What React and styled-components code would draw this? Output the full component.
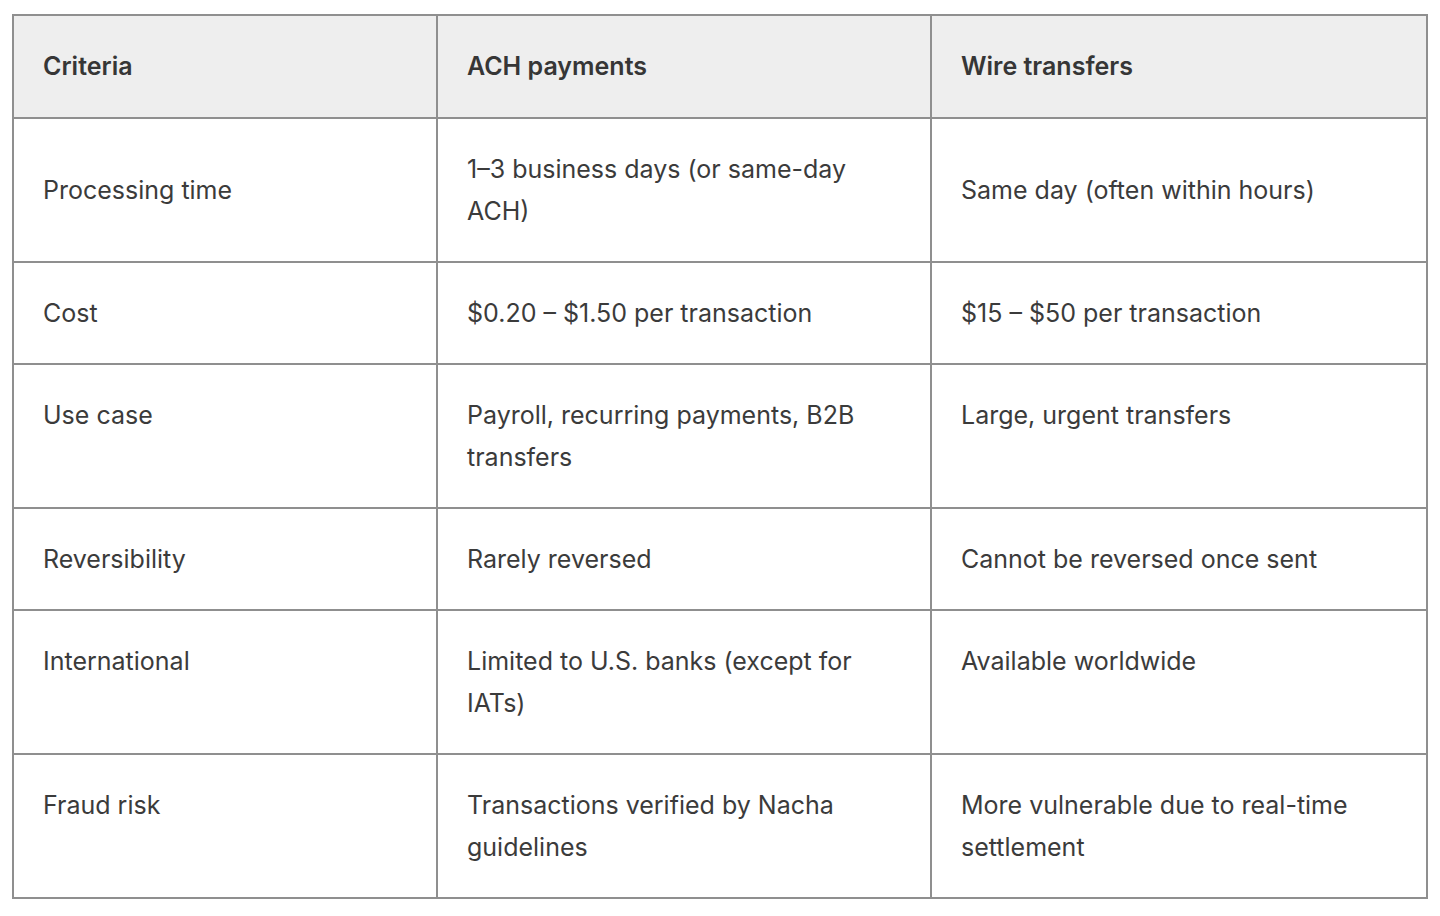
import React from 'react';
import styled, { createGlobalStyle } from 'styled-components';

const GlobalStyle = createGlobalStyle`
  html, body {
    margin: 0;
    padding: 0;
    background: #ffffff;
  }
  body {
    font-family: Inter, "Liberation Sans", Arial, sans-serif;
    -webkit-font-smoothing: antialiased;
  }
`;

const Page = styled.div`
  padding: 14px 13px 0 12px;
`;

const Table = styled.table`
  width: 1414px;
  border-collapse: collapse;
  table-layout: fixed;
  border: 2px solid #8f8f8f;
  color: #3b3b3b;
  font-size: 25px;
  line-height: 42px;
`;

const HeadCell = styled.th`
  background: #eeeeee;
  text-align: left;
  font-weight: 600;
  padding: 29px 28px 30px 29px;
  border: 2px solid #8f8f8f;
  color: #363636;
`;

const Cell = styled.td`
  padding: 29px 28px 29px 29px;
  border: 2px solid #8f8f8f;
  vertical-align: ${(p) => (p.$middle ? 'middle' : 'top')};
`;

const rows = [
  ['Processing time', '1–3 business days (or same-day ACH)', 'Same day (often within hours)', true],
  ['Cost', '$0.20 – $1.50 per transaction', '$15 – $50 per transaction'],
  ['Use case', 'Payroll, recurring payments, B2B transfers', 'Large, urgent transfers'],
  ['Reversibility', 'Rarely reversed', 'Cannot be reversed once sent'],
  ['International', 'Limited to U.S. banks (except for IATs)', 'Available worldwide'],
  ['Fraud risk', 'Transactions verified by Nacha guidelines', 'More vulnerable due to real-time settlement'],
];

const App = () => {
  return (
    <Page>
      <GlobalStyle />
      <Table>
        <colgroup>
          <col style={{ width: 424 }} />
          <col style={{ width: 494 }} />
          <col style={{ width: 496 }} />
        </colgroup>
        <thead>
          <tr>
            <HeadCell>Criteria</HeadCell>
            <HeadCell>ACH payments</HeadCell>
            <HeadCell>Wire transfers</HeadCell>
          </tr>
        </thead>
        <tbody>
          {rows.map(([criteria, ach, wire, middle]) => (
            <tr key={criteria}>
              <Cell $middle={middle}>{criteria}</Cell>
              <Cell $middle={middle}>{ach}</Cell>
              <Cell $middle={middle}>{wire}</Cell>
            </tr>
          ))}
        </tbody>
      </Table>
    </Page>
  );
};

export default App;
